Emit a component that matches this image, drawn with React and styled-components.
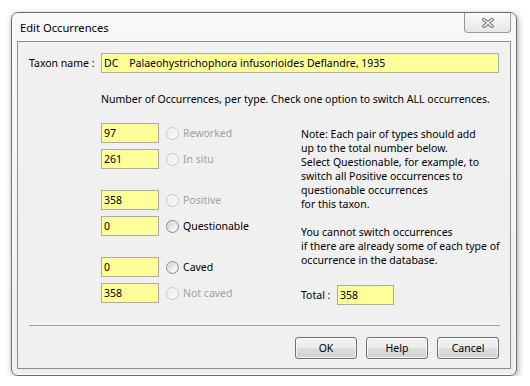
import React from "react";
import styled, { createGlobalStyle } from "styled-components";

const GlobalStyle = createGlobalStyle`
    body {
        margin: 0;
        background: #ffffff;
        font-family: "Noto Sans", "Open Sans", sans-serif;
        font-size: 10.5px;
        color: #000;
    }
`;

const Window = styled.div`
    box-sizing: border-box;
    width: 506px;
    height: 364px;
    margin: 12px 0 0 11px;
    padding: 0 5px 6px 5px;
    border: 1px solid #6a6a6a;
    border-radius: 7px;
    background: linear-gradient(to bottom, #f8f8f8, #eeeeee);
    box-shadow: 1px 2px 6px rgba(0, 0, 0, 0.35), inset 0 0 0 1px rgba(255, 255, 255, 0.8);
    display: flex;
    flex-direction: column;
`;

const TitleBar = styled.div`
    height: 28px;
    display: flex;
    align-items: flex-start;
    justify-content: space-between;
`;

const Title = styled.span`
    font-size: 11.2px;
    padding: 7px 0 0 3px;
    color: #000;
`;

const CloseButton = styled.div`
    box-sizing: border-box;
    width: 47px;
    height: 20px;
    border: 1px solid #9a9a9a;
    border-top: none;
    border-radius: 0 0 4px 4px;
    background: linear-gradient(to bottom, #fafafa, #e6e6e6);
    display: flex;
    align-items: center;
    justify-content: center;
`;

const Client = styled.div`
    box-sizing: border-box;
    flex: 1;
    border: 1px solid #8e8e8e;
    background: #f0f0f0;
    display: flex;
    flex-direction: column;
`;

const TaxonRow = styled.div`
    display: flex;
    align-items: center;
    margin-top: 11px;
    padding-left: 11px;
`;

const FieldLabel = styled.span`
    width: ${({ $width }) => $width}px;
    flex-shrink: 0;
`;

const TextBox = styled.input`
    box-sizing: border-box;
    width: ${({ $width }) => $width}px;
    height: 20px;
    margin: 0;
    padding: 0 2px;
    border: 1px solid #a9a9a9;
    background: #ffff99;
    font-family: inherit;
    font-size: 10.5px;
    color: #000;
    outline: none;
`;

const Intro = styled.div`
    margin-top: 19px;
    padding-left: 83px;
    line-height: 14px;
`;

const Body = styled.div`
    display: flex;
    margin-top: 17px;
    padding-left: 83px;
`;

const Counts = styled.div`
    width: 200px;
    display: flex;
    flex-direction: column;
    gap: 21px;
`;

const CountGroup = styled.div`
    display: flex;
    flex-direction: column;
    gap: 6px;
`;

const CountRow = styled.div`
    display: flex;
    align-items: center;
    height: 20px;
`;

const Radio = styled.span`
    box-sizing: border-box;
    width: 13px;
    height: 13px;
    margin: 0 4px 0 7px;
    border-radius: 50%;
    border: 1px solid ${({ $disabled }) => ($disabled ? "#c6c6c6" : "#8a8a8a")};
    background: ${({ $disabled }) =>
        $disabled
            ? "linear-gradient(135deg, #ececec, #fbfbfb)"
            : "linear-gradient(135deg, #c9c9c9, #f6f6f6 70%, #ffffff)"};
    box-shadow: inset 0 0 0 1px ${({ $disabled }) => ($disabled ? "#f4f4f4" : "#e8e8e8")};
`;

const RadioLabel = styled.span`
    color: ${({ $disabled }) => ($disabled ? "#a0a0a0" : "#000")};
`;

const Notes = styled.div`
    display: flex;
    flex-direction: column;
    padding-top: 4px;
`;

const NoteText = styled.p`
    margin: 0;
    line-height: 14px;
    & + & {
        margin-top: 14px;
    }
`;

const TotalRow = styled.div`
    display: flex;
    align-items: center;
    margin-top: 18px;
`;

const Separator = styled.div`
    margin: 20px 10px 0 11px;
    border-top: 1px solid #a0a0a0;
`;

const ButtonRow = styled.div`
    display: flex;
    justify-content: flex-end;
    gap: 9px;
    margin-top: 11px;
    padding-right: 11px;
`;

const Button = styled.button`
    box-sizing: border-box;
    width: 62px;
    height: 22px;
    padding: 0;
    border: 1px solid #707070;
    border-radius: 3px;
    background: linear-gradient(to bottom, #f3f3f3 0%, #ebebeb 50%, #dddddd 51%, #d0d0d0 100%);
    box-shadow: inset 0 0 0 1px rgba(255, 255, 255, 0.75);
    font-family: inherit;
    font-size: 10.5px;
    color: #000;
`;

const CloseGlyph = () => (
    <svg width="12" height="10" viewBox="0 0 12 10">
        <path d="M2 1.5 L10 8.5 M10 1.5 L2 8.5" stroke="#6e6e6e" strokeWidth="3.4" strokeLinecap="square" />
        <path d="M2 1.5 L10 8.5 M10 1.5 L2 8.5" stroke="#ffffff" strokeWidth="1.4" strokeLinecap="square" />
    </svg>
);

const groups = [
    [
        { value: "97", label: "Reworked", disabled: true },
        { value: "261", label: "In situ", disabled: true },
    ],
    [
        { value: "358", label: "Positive", disabled: true },
        { value: "0", label: "Questionable", disabled: false },
    ],
    [
        { value: "0", label: "Caved", disabled: false },
        { value: "358", label: "Not caved", disabled: true },
    ],
];

export default function App() {
    return (
        <>
            <GlobalStyle />
            <Window>
                <TitleBar>
                    <Title>Edit Occurrences</Title>
                    <CloseButton>
                        <CloseGlyph />
                    </CloseButton>
                </TitleBar>
                <Client>
                    <TaxonRow>
                        <FieldLabel $width={72}>Taxon name :</FieldLabel>
                        <TextBox
                            $width={398}
                            readOnly
                            value="DC    Palaeohystrichophora infusorioides Deflandre, 1935"
                        />
                    </TaxonRow>
                    <Intro>Number of Occurrences, per type. Check one option to switch ALL occurrences.</Intro>
                    <Body>
                        <Counts>
                            {groups.map((group, i) => (
                                <CountGroup key={i}>
                                    {group.map((row) => (
                                        <CountRow key={row.label}>
                                            <TextBox $width={58} readOnly value={row.value} />
                                            <Radio $disabled={row.disabled} />
                                            <RadioLabel $disabled={row.disabled}>{row.label}</RadioLabel>
                                        </CountRow>
                                    ))}
                                </CountGroup>
                            ))}
                        </Counts>
                        <Notes>
                            <NoteText>
                                Note: Each pair of types should add
                                <br />
                                up to the total number below.
                                <br />
                                Select Questionable, for example, to
                                <br />
                                switch all Positive occurrences to
                                <br />
                                questionable occurrences
                                <br />
                                for this taxon.
                            </NoteText>
                            <NoteText>
                                You cannot switch occurrences
                                <br />
                                if there are already some of each type of
                                <br />
                                occurrence in the database.
                            </NoteText>
                            <TotalRow>
                                <FieldLabel $width={36}>Total :</FieldLabel>
                                <TextBox $width={57} readOnly value="358" />
                            </TotalRow>
                        </Notes>
                    </Body>
                    <Separator />
                    <ButtonRow>
                        <Button>OK</Button>
                        <Button>Help</Button>
                        <Button>Cancel</Button>
                    </ButtonRow>
                </Client>
            </Window>
        </>
    );
}
